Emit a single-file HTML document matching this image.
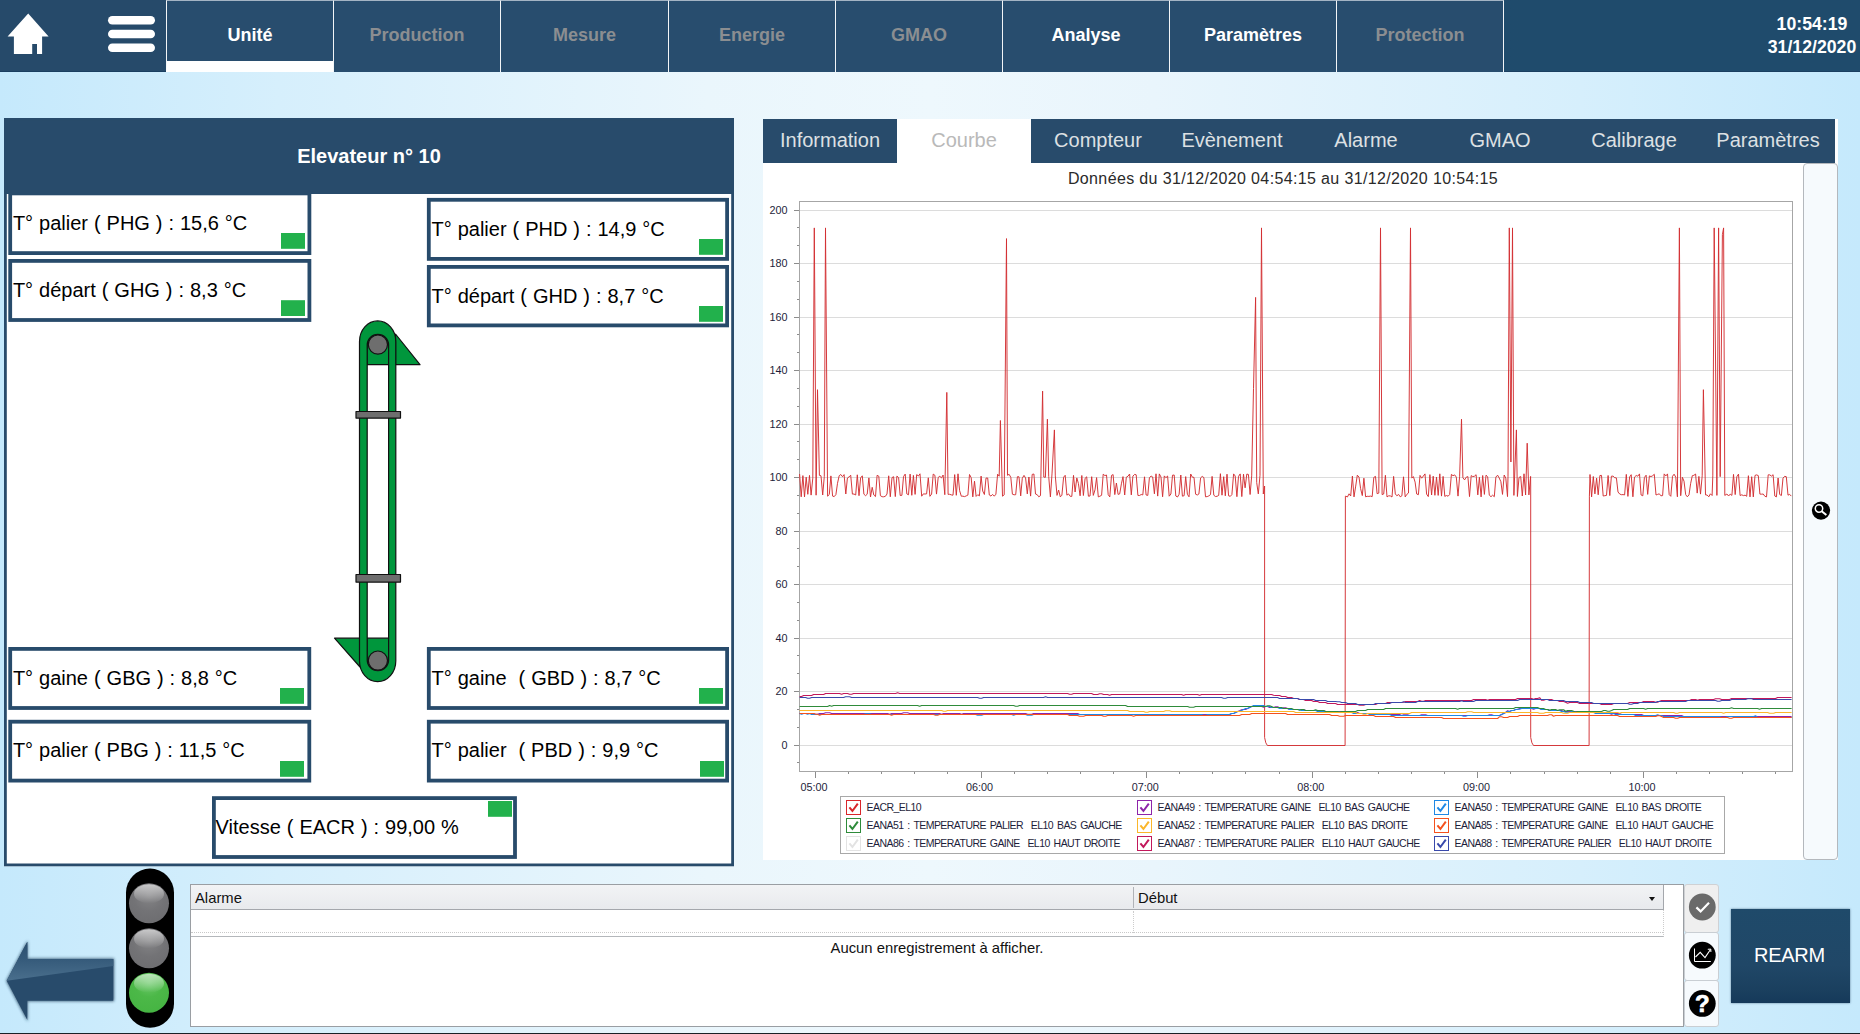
<!DOCTYPE html>
<html><head><meta charset="utf-8"><title>Elevateur</title>
<style>
*{box-sizing:border-box;margin:0;padding:0}
html,body{width:1860px;height:1034px;overflow:hidden}
body{position:relative;font-family:"Liberation Sans",sans-serif;background:linear-gradient(90deg,#c5e9fc 0%,#d6effc 15%,#eaf6fc 38%,#eef8fd 50%,#e9f5fc 62%,#d6effc 85%,#c5e9fc 100%)}
.abs{position:absolute}
#nav{position:absolute;left:0;top:0;width:1860px;height:72px;background:linear-gradient(90deg,#264a6a 0%,#264a6a 8%,#1f4b6c 82%,#1f4b6c 100%);border-bottom:1px solid #1a3f60}
.nt{position:absolute;top:0;height:72px;background:#284d6e;border:1px solid #f2f5f7;border-top-color:#a4b4c4;border-bottom:none;color:#8b8e91;font-weight:bold;font-size:18px;text-align:center;line-height:69px}
.nt.on{color:#fff}
.nt.sel{border-bottom:11px solid #fff;line-height:69px}
#clock{position:absolute;left:1752px;top:12.5px;width:120px;text-align:center;color:#fff;font-weight:bold;font-size:17.7px;line-height:23px}
#lph{position:absolute;left:4px;top:118px;width:730px;height:76px;color:#fff;font-weight:bold;font-size:20px;text-align:center;line-height:76px}
.vt{position:absolute;font-size:20px;color:#000;white-space:pre;word-spacing:.4px;line-height:23px}
#rp{position:absolute;left:763px;top:119px;width:1075px;height:741px;background:#fff}
#rbar{position:absolute;left:763px;top:119px;width:1072px;height:44px;background:#284b6b}
.st{position:absolute;top:119px;height:44px;color:#dde0e3;font-size:20px;text-align:center;line-height:42px}
.st.sel{background:#fff;color:#b9b9b9}
#side{position:absolute;left:1803px;top:163px;width:35px;height:697px;background:#f6fafd;border:1px solid #b4b8bd;border-radius:4px}
#title{position:absolute;left:763px;width:1040px;top:169px;text-align:center;font-size:16px;letter-spacing:.36px;color:#2a2a2a;line-height:20px}
#legbox{position:absolute;left:840px;top:796px;width:885px;height:57.5px;border:1px solid #a8a8a8;background:#fff}
.lg{position:absolute;height:15px;white-space:pre}
.lg span{position:absolute;left:20.5px;top:0;font-size:10.5px;line-height:15px;letter-spacing:-.55px;word-spacing:1.5px;color:#1d1d3a}
#tbl{position:absolute;left:190px;top:884px;width:1494px;height:142.5px;background:#fff;border:1px solid #9a9ea3}
#th{position:absolute;left:0;top:0;width:1473px;height:25px;background:linear-gradient(#f2f3f5,#e8eaed);border-bottom:1px solid #a4a7ac;border-right:1px solid #a4a7ac}
#fr{position:absolute;left:0;top:25px;width:1473px;height:27px;border-bottom:1px solid #b4b7bb;border-right:1px dotted #ccc}
#fr:after{content:"";position:absolute;left:0;right:0;bottom:3px;border-top:1px dotted #c8c8c8}
.btn{position:absolute;left:1684px;width:35px;background:#f6fafd;border:1px solid #c9ced3;border-radius:3px}
#rearm{position:absolute;left:1731px;top:908.5px;width:119px;height:94.5px;background:linear-gradient(#1f4a6a 0%,#204767 60%,#1a3f5e 88%,#15395a 100%);color:#fff;font-size:20px;letter-spacing:-.3px;text-indent:-2.2px;text-align:center;line-height:92px;box-shadow:0 0 2px rgba(20,50,80,.6)}
</style></head><body>
<div id="nav"></div>
<div class="nt on sel" style="left:166px;width:168px"><span>Unité</span></div><div class="nt" style="left:333px;width:168px"><span>Production</span></div><div class="nt" style="left:500px;width:169px"><span>Mesure</span></div><div class="nt" style="left:668px;width:168px"><span>Energie</span></div><div class="nt" style="left:835px;width:168px"><span>GMAO</span></div><div class="nt on" style="left:1002px;width:168px"><span>Analyse</span></div><div class="nt on" style="left:1169px;width:168px"><span>Paramètres</span></div><div class="nt" style="left:1336px;width:168px"><span>Protection</span></div>
<svg class="abs" style="left:0;top:0" width="166" height="72" viewBox="0 0 166 72"><path d="M28.2 13.4 L48.6 36.6 L42.1 36.6 L42.1 54 L37 54 L37 44 L32.2 44 L32.2 54 L13.9 54 L13.9 36.6 L7.6 36.6 Z" fill="#fff"/>
<rect x="108" y="16" width="47" height="8.6" rx="4.3" fill="#fff"/><rect x="108" y="29.7" width="47" height="8.6" rx="4.3" fill="#fff"/><rect x="108" y="43.4" width="47" height="8.6" rx="4.3" fill="#fff"/></svg>
<div id="clock">10:54:19<br>31/12/2020</div>

<svg class="abs" style="left:0;top:110px" width="740" height="760" viewBox="0 110 740 760">
<rect x="4" y="118" width="730" height="748.3" fill="#fff"/>
<rect x="10.20" y="193.40" width="299.20" height="59.70" fill="#fff" stroke="#284b6b" stroke-width="3.8"/><rect x="281" y="233" width="24" height="15.8" fill="#22b14c"/><rect x="10.20" y="260.90" width="299.20" height="59.10" fill="#fff" stroke="#284b6b" stroke-width="3.8"/><rect x="281" y="300.2" width="24" height="15.8" fill="#22b14c"/><rect x="428.80" y="199.80" width="298.30" height="59.10" fill="#fff" stroke="#284b6b" stroke-width="3.8"/><rect x="699" y="239" width="24" height="15.8" fill="#22b14c"/><rect x="428.80" y="266.90" width="298.30" height="58.50" fill="#fff" stroke="#284b6b" stroke-width="3.8"/><rect x="699" y="306" width="24" height="15.8" fill="#22b14c"/><rect x="10.20" y="648.90" width="299.10" height="59.10" fill="#fff" stroke="#284b6b" stroke-width="3.8"/><rect x="280" y="688" width="24" height="15.8" fill="#22b14c"/><rect x="10.20" y="721.70" width="299.10" height="58.90" fill="#fff" stroke="#284b6b" stroke-width="3.8"/><rect x="280" y="761" width="24" height="15.8" fill="#22b14c"/><rect x="428.80" y="648.90" width="298.30" height="59.10" fill="#fff" stroke="#284b6b" stroke-width="3.8"/><rect x="699" y="688" width="24" height="15.8" fill="#22b14c"/><rect x="428.80" y="721.70" width="298.30" height="58.90" fill="#fff" stroke="#284b6b" stroke-width="3.8"/><rect x="700" y="761" width="24" height="15.8" fill="#22b14c"/><rect x="213.90" y="798.10" width="301.10" height="58.90" fill="#fff" stroke="#284b6b" stroke-width="3.8"/><rect x="488" y="801" width="24" height="15.8" fill="#22b14c"/>
<rect x="4" y="118" width="730" height="76" fill="#284b6b"/>
<rect x="5.4" y="119.4" width="727.2" height="745.5" fill="none" stroke="#284b6b" stroke-width="2.8"/>
</svg>
<div class="vt" style="left:12.9px;top:212.3px">T° palier ( PHG ) : 15,6 °C</div><div class="vt" style="left:12.9px;top:278.6px">T° départ ( GHG ) : 8,3 °C</div><div class="vt" style="left:431.5px;top:217.5px">T° palier ( PHD ) : 14,9 °C</div><div class="vt" style="left:431.5px;top:285.2px">T° départ ( GHD ) : 8,7 °C</div><div class="vt" style="left:12.9px;top:666.6px">T° gaine ( GBG ) : 8,8 °C</div><div class="vt" style="left:12.9px;top:739.2px">T° palier ( PBG ) : 11,5 °C</div><div class="vt" style="left:431.5px;top:666.6px">T° gaine  ( GBD ) : 8,7 °C</div><div class="vt" style="left:431.5px;top:739.2px">T° palier  ( PBD ) : 9,9 °C</div><div class="vt" style="left:215.6px;top:815.6px">Vitesse ( EACR ) : 99,00 %</div>
<div id="lph">Elevateur n° 10</div>
<svg class="abs" style="left:320px;top:310px" width="120" height="380" viewBox="320 310 120 380">
 <g stroke="#111" stroke-width="1.2" stroke-linejoin="round">
  <path d="M395.5 334 L420 364.7 L395.5 364.7 Z" fill="#00963c"/>
  <path d="M360 667 L334.5 638.2 L360 638.2 Z" fill="#00963c"/>
  <path d="M367 364.7 L367 345 A10.9 10.9 0 0 1 388.8 345 L388.8 364.7 Z" fill="#00963c"/>
  <path d="M367 638.2 L367 660 A10.9 10.9 0 0 0 388.8 660 L388.8 638.2 Z" fill="#00963c"/>
  <path d="M359.5 341.5 A18.15 20.6 0 0 1 395.8 341.5 L395.8 661 A18.15 20.6 0 0 1 359.5 661 Z M367.2 345 L367.2 660 A10.7 10.7 0 0 0 388.6 660 L388.6 345 A10.7 10.7 0 0 0 367.2 345 Z" fill="#00963c" fill-rule="evenodd"/>
  <circle cx="377.9" cy="344.6" r="9.6" fill="#6e6e6e"/>
  <circle cx="377.9" cy="660.6" r="9.6" fill="#6e6e6e"/>
  <rect x="356" y="411.5" width="44.5" height="6.6" fill="#6e6e6e"/>
  <rect x="356" y="574.5" width="44.5" height="7.6" fill="#6e6e6e"/>
 </g>
</svg>

<div id="rp"></div><div id="rbar"></div>
<div class="st" style="left:763px;width:134px">Information</div><div class="st sel" style="left:897px;width:134px">Courbe</div><div class="st" style="left:1031px;width:134px">Compteur</div><div class="st" style="left:1165px;width:134px">Evènement</div><div class="st" style="left:1299px;width:134px">Alarme</div><div class="st" style="left:1433px;width:134px">GMAO</div><div class="st" style="left:1567px;width:134px">Calibrage</div><div class="st" style="left:1701px;width:134px">Paramètres</div>
<div id="side"></div>
<svg class="abs" style="left:1810px;top:500px" width="22" height="22" viewBox="0 0 22 22"><circle cx="11" cy="10.6" r="9.1" fill="#000"/><circle cx="9" cy="8.5" r="3.7" fill="none" stroke="#fff" stroke-width="1.5"/><path d="M11.7 11.3 L16.4 15" stroke="#fff" stroke-width="2" stroke-linecap="butt"/></svg>
<div id="title">Données du 31/12/2020 04:54:15 au 31/12/2020 10:54:15</div>
<div id="legbox"></div>
<svg style="position:absolute;left:0;top:0" width="1860" height="1034" viewBox="0 0 1860 1034">
<g shape-rendering="crispEdges"><line x1="799.5" x2="1792.5" y1="745.5" y2="745.5" stroke="#dcdcdc" stroke-width="1"/><line x1="799.5" x2="1792.5" y1="691.5" y2="691.5" stroke="#dcdcdc" stroke-width="1"/><line x1="799.5" x2="1792.5" y1="638.5" y2="638.5" stroke="#dcdcdc" stroke-width="1"/><line x1="799.5" x2="1792.5" y1="584.5" y2="584.5" stroke="#dcdcdc" stroke-width="1"/><line x1="799.5" x2="1792.5" y1="531.5" y2="531.5" stroke="#dcdcdc" stroke-width="1"/><line x1="799.5" x2="1792.5" y1="477.5" y2="477.5" stroke="#dcdcdc" stroke-width="1"/><line x1="799.5" x2="1792.5" y1="424.5" y2="424.5" stroke="#dcdcdc" stroke-width="1"/><line x1="799.5" x2="1792.5" y1="370.5" y2="370.5" stroke="#dcdcdc" stroke-width="1"/><line x1="799.5" x2="1792.5" y1="317.5" y2="317.5" stroke="#dcdcdc" stroke-width="1"/><line x1="799.5" x2="1792.5" y1="263.5" y2="263.5" stroke="#dcdcdc" stroke-width="1"/><line x1="799.5" x2="1792.5" y1="210.5" y2="210.5" stroke="#dcdcdc" stroke-width="1"/><line x1="797" x2="799.5" y1="762.5" y2="762.5" stroke="#8c8c8c" stroke-width="1"/><line x1="794" x2="799.5" y1="745.5" y2="745.5" stroke="#8c8c8c" stroke-width="1"/><line x1="797" x2="799.5" y1="727.5" y2="727.5" stroke="#8c8c8c" stroke-width="1"/><line x1="797" x2="799.5" y1="709.5" y2="709.5" stroke="#8c8c8c" stroke-width="1"/><line x1="794" x2="799.5" y1="691.5" y2="691.5" stroke="#8c8c8c" stroke-width="1"/><line x1="797" x2="799.5" y1="673.5" y2="673.5" stroke="#8c8c8c" stroke-width="1"/><line x1="797" x2="799.5" y1="655.5" y2="655.5" stroke="#8c8c8c" stroke-width="1"/><line x1="794" x2="799.5" y1="638.5" y2="638.5" stroke="#8c8c8c" stroke-width="1"/><line x1="797" x2="799.5" y1="620.5" y2="620.5" stroke="#8c8c8c" stroke-width="1"/><line x1="797" x2="799.5" y1="602.5" y2="602.5" stroke="#8c8c8c" stroke-width="1"/><line x1="794" x2="799.5" y1="584.5" y2="584.5" stroke="#8c8c8c" stroke-width="1"/><line x1="797" x2="799.5" y1="566.5" y2="566.5" stroke="#8c8c8c" stroke-width="1"/><line x1="797" x2="799.5" y1="548.5" y2="548.5" stroke="#8c8c8c" stroke-width="1"/><line x1="794" x2="799.5" y1="531.5" y2="531.5" stroke="#8c8c8c" stroke-width="1"/><line x1="797" x2="799.5" y1="513.5" y2="513.5" stroke="#8c8c8c" stroke-width="1"/><line x1="797" x2="799.5" y1="495.5" y2="495.5" stroke="#8c8c8c" stroke-width="1"/><line x1="794" x2="799.5" y1="477.5" y2="477.5" stroke="#8c8c8c" stroke-width="1"/><line x1="797" x2="799.5" y1="459.5" y2="459.5" stroke="#8c8c8c" stroke-width="1"/><line x1="797" x2="799.5" y1="441.5" y2="441.5" stroke="#8c8c8c" stroke-width="1"/><line x1="794" x2="799.5" y1="424.5" y2="424.5" stroke="#8c8c8c" stroke-width="1"/><line x1="797" x2="799.5" y1="406.5" y2="406.5" stroke="#8c8c8c" stroke-width="1"/><line x1="797" x2="799.5" y1="388.5" y2="388.5" stroke="#8c8c8c" stroke-width="1"/><line x1="794" x2="799.5" y1="370.5" y2="370.5" stroke="#8c8c8c" stroke-width="1"/><line x1="797" x2="799.5" y1="352.5" y2="352.5" stroke="#8c8c8c" stroke-width="1"/><line x1="797" x2="799.5" y1="334.5" y2="334.5" stroke="#8c8c8c" stroke-width="1"/><line x1="794" x2="799.5" y1="317.5" y2="317.5" stroke="#8c8c8c" stroke-width="1"/><line x1="797" x2="799.5" y1="299.5" y2="299.5" stroke="#8c8c8c" stroke-width="1"/><line x1="797" x2="799.5" y1="281.5" y2="281.5" stroke="#8c8c8c" stroke-width="1"/><line x1="794" x2="799.5" y1="263.5" y2="263.5" stroke="#8c8c8c" stroke-width="1"/><line x1="797" x2="799.5" y1="245.5" y2="245.5" stroke="#8c8c8c" stroke-width="1"/><line x1="797" x2="799.5" y1="227.5" y2="227.5" stroke="#8c8c8c" stroke-width="1"/><line x1="794" x2="799.5" y1="210.5" y2="210.5" stroke="#8c8c8c" stroke-width="1"/><line x1="815.5" x2="815.5" y1="771.0" y2="777.5" stroke="#8c8c8c" stroke-width="1"/><line x1="848.5" x2="848.5" y1="771.0" y2="774" stroke="#8c8c8c" stroke-width="1"/><line x1="881.5" x2="881.5" y1="771.0" y2="774" stroke="#8c8c8c" stroke-width="1"/><line x1="914.5" x2="914.5" y1="771.0" y2="774" stroke="#8c8c8c" stroke-width="1"/><line x1="947.5" x2="947.5" y1="771.0" y2="774" stroke="#8c8c8c" stroke-width="1"/><line x1="981.5" x2="981.5" y1="771.0" y2="777.5" stroke="#8c8c8c" stroke-width="1"/><line x1="1014.5" x2="1014.5" y1="771.0" y2="774" stroke="#8c8c8c" stroke-width="1"/><line x1="1047.5" x2="1047.5" y1="771.0" y2="774" stroke="#8c8c8c" stroke-width="1"/><line x1="1080.5" x2="1080.5" y1="771.0" y2="774" stroke="#8c8c8c" stroke-width="1"/><line x1="1113.5" x2="1113.5" y1="771.0" y2="774" stroke="#8c8c8c" stroke-width="1"/><line x1="1146.5" x2="1146.5" y1="771.0" y2="777.5" stroke="#8c8c8c" stroke-width="1"/><line x1="1179.5" x2="1179.5" y1="771.0" y2="774" stroke="#8c8c8c" stroke-width="1"/><line x1="1212.5" x2="1212.5" y1="771.0" y2="774" stroke="#8c8c8c" stroke-width="1"/><line x1="1245.5" x2="1245.5" y1="771.0" y2="774" stroke="#8c8c8c" stroke-width="1"/><line x1="1279.5" x2="1279.5" y1="771.0" y2="774" stroke="#8c8c8c" stroke-width="1"/><line x1="1312.5" x2="1312.5" y1="771.0" y2="777.5" stroke="#8c8c8c" stroke-width="1"/><line x1="1345.5" x2="1345.5" y1="771.0" y2="774" stroke="#8c8c8c" stroke-width="1"/><line x1="1378.5" x2="1378.5" y1="771.0" y2="774" stroke="#8c8c8c" stroke-width="1"/><line x1="1411.5" x2="1411.5" y1="771.0" y2="774" stroke="#8c8c8c" stroke-width="1"/><line x1="1444.5" x2="1444.5" y1="771.0" y2="774" stroke="#8c8c8c" stroke-width="1"/><line x1="1477.5" x2="1477.5" y1="771.0" y2="777.5" stroke="#8c8c8c" stroke-width="1"/><line x1="1510.5" x2="1510.5" y1="771.0" y2="774" stroke="#8c8c8c" stroke-width="1"/><line x1="1544.5" x2="1544.5" y1="771.0" y2="774" stroke="#8c8c8c" stroke-width="1"/><line x1="1577.5" x2="1577.5" y1="771.0" y2="774" stroke="#8c8c8c" stroke-width="1"/><line x1="1610.5" x2="1610.5" y1="771.0" y2="774" stroke="#8c8c8c" stroke-width="1"/><line x1="1643.5" x2="1643.5" y1="771.0" y2="777.5" stroke="#8c8c8c" stroke-width="1"/><line x1="1676.5" x2="1676.5" y1="771.0" y2="774" stroke="#8c8c8c" stroke-width="1"/><line x1="1709.5" x2="1709.5" y1="771.0" y2="774" stroke="#8c8c8c" stroke-width="1"/><line x1="1742.5" x2="1742.5" y1="771.0" y2="774" stroke="#8c8c8c" stroke-width="1"/><line x1="1775.5" x2="1775.5" y1="771.0" y2="774" stroke="#8c8c8c" stroke-width="1"/>
<rect x="799.5" y="201.5" width="993.0" height="569.5" fill="none" stroke="#a6a6a6" stroke-width="1"/></g>
<g fill="none" stroke-width="1.12" stroke-linejoin="round">
<path d="M799.6,474.0 L801.2,496.8 L802.9,475.6 L804.5,496.9 L806.2,477.2 L807.8,494.3 L809.5,475.4 L811.1,495.1 L812.8,478.1 L814.3,227.9 L816.1,495.2 L817.5,389.7 L819.4,475.4 L821.0,475.8 L822.7,495.0 L824.3,476.3 L825.5,227.9 L827.6,496.2 L829.3,494.5 L830.9,475.9 L832.6,496.1 L834.2,496.6 L835.9,494.6 L837.5,483.3 L839.2,475.7 L840.8,474.5 L842.5,476.7 L844.1,474.6 L845.8,494.0 L847.4,478.0 L849.1,476.9 L850.7,475.2 L852.4,494.1 L854.0,494.0 L855.7,495.0 L857.3,474.8 L859.0,495.7 L860.6,477.9 L862.3,475.8 L863.9,494.2 L865.6,495.7 L867.2,494.2 L868.9,477.9 L870.5,497.0 L872.2,487.3 L873.8,495.0 L875.5,496.6 L877.1,475.3 L878.8,476.2 L880.4,495.7 L882.1,496.7 L883.7,496.8 L885.4,496.3 L887.0,494.0 L888.7,475.8 L890.3,496.8 L892.0,477.6 L893.6,476.7 L895.3,496.6 L896.9,476.1 L898.6,477.6 L900.2,495.5 L901.9,495.3 L903.5,476.6 L905.2,474.1 L906.8,493.9 L908.5,494.8 L910.1,474.1 L911.8,495.3 L913.4,475.4 L915.1,494.4 L916.7,474.6 L918.4,476.0 L920.0,473.8 L921.7,496.2 L923.3,493.9 L925.0,494.0 L926.6,493.9 L928.3,477.8 L929.9,496.3 L931.6,494.1 L933.2,474.1 L934.9,475.3 L936.5,494.1 L938.2,477.4 L939.8,476.3 L941.5,477.9 L943.1,475.0 L944.8,494.7 L946.8,392.4 L948.1,494.4 L949.7,494.3 L951.4,494.9 L953.0,495.2 L954.7,474.6 L956.3,495.3 L958.0,473.8 L959.6,490.6 L961.3,496.2 L962.9,496.2 L964.6,496.6 L966.2,495.9 L967.9,495.1 L969.5,474.5 L971.2,477.7 L972.8,496.9 L974.5,481.2 L976.1,496.4 L977.8,494.7 L979.4,495.9 L981.1,476.1 L982.7,491.0 L984.4,494.5 L986.0,478.1 L987.7,478.0 L989.3,495.0 L991.0,496.1 L992.6,494.4 L994.3,496.2 L995.9,494.2 L997.6,474.2 L999.2,476.2 L1000.4,420.5 L1002.5,496.2 L1004.2,494.8 L1006.5,238.6 L1007.5,475.3 L1009.1,474.3 L1010.8,477.3 L1012.4,494.2 L1014.1,494.8 L1015.7,494.7 L1017.4,476.7 L1019.0,476.8 L1020.7,495.9 L1022.3,478.2 L1024.0,475.4 L1025.6,478.0 L1027.3,493.9 L1028.9,477.0 L1030.6,496.1 L1032.2,474.4 L1033.9,474.0 L1035.5,494.0 L1037.2,494.7 L1038.8,496.8 L1040.5,495.6 L1042.6,391.1 L1043.8,477.1 L1045.4,477.3 L1047.4,419.2 L1048.7,476.4 L1050.4,496.9 L1052.0,473.9 L1054.4,429.9 L1055.3,475.9 L1057.0,495.4 L1058.6,490.0 L1060.3,496.9 L1061.9,495.2 L1063.6,477.2 L1065.2,475.3 L1066.9,495.2 L1068.5,493.9 L1070.2,496.3 L1071.8,496.4 L1073.5,475.4 L1075.1,492.0 L1076.8,477.9 L1078.4,483.4 L1080.1,495.8 L1081.8,475.5 L1083.4,495.5 L1085.1,478.3 L1086.7,476.8 L1088.4,496.2 L1090.0,496.0 L1091.7,476.7 L1093.3,495.4 L1095.0,489.8 L1096.6,477.6 L1098.3,496.9 L1099.9,496.2 L1101.6,495.3 L1103.2,474.2 L1104.9,475.6 L1106.5,475.0 L1108.2,494.7 L1109.8,496.9 L1111.5,475.4 L1113.1,474.6 L1114.8,494.6 L1116.4,483.0 L1118.1,494.4 L1119.7,493.9 L1121.4,483.8 L1123.0,476.6 L1124.7,495.0 L1126.3,477.2 L1128.0,476.2 L1129.6,474.0 L1131.3,494.9 L1132.9,476.1 L1134.6,474.4 L1136.2,474.8 L1137.9,495.4 L1139.5,495.5 L1141.2,494.5 L1142.8,494.9 L1144.5,476.8 L1146.1,495.0 L1147.8,495.4 L1149.4,477.8 L1151.1,476.0 L1152.7,477.0 L1154.4,493.8 L1156.0,473.8 L1157.7,496.1 L1159.3,473.9 L1161.0,477.0 L1162.6,496.8 L1164.3,475.9 L1165.9,477.7 L1167.6,476.0 L1169.2,496.2 L1170.9,494.0 L1172.5,475.2 L1174.2,475.0 L1175.8,496.0 L1177.5,497.0 L1179.1,494.3 L1180.8,475.0 L1182.4,496.2 L1184.1,495.7 L1185.7,476.6 L1187.4,494.3 L1189.0,496.8 L1190.7,474.0 L1192.3,477.1 L1194.0,477.4 L1195.6,494.2 L1197.3,495.0 L1198.9,494.0 L1200.6,477.9 L1202.2,476.4 L1203.9,477.6 L1205.5,496.8 L1207.2,496.6 L1208.8,495.9 L1210.5,494.6 L1212.1,476.4 L1213.8,495.2 L1215.4,496.5 L1217.1,496.3 L1218.7,495.4 L1220.4,473.7 L1222.0,495.2 L1223.7,476.7 L1225.3,495.8 L1227.0,474.2 L1228.6,495.8 L1230.3,496.3 L1231.9,494.6 L1233.6,473.9 L1235.2,476.0 L1236.9,496.7 L1238.5,476.4 L1240.2,473.9 L1241.8,496.6 L1243.5,474.2 L1245.1,487.8 L1246.8,474.1 L1248.4,474.4 L1250.1,494.5 L1251.7,475.9 L1253.5,388.4 L1255.6,297.4 L1256.7,482.6 L1258.3,493.9 L1260.0,475.4 L1261.5,227.9 L1263.3,494.0 L1264.6,486.0 L1264.6,737.5 L1265.8,742.8 L1267.4,745.5 L1345.1,745.5 L1345.4,496.2 L1345.8,496.2 L1347.4,497.0 L1349.1,493.8 L1350.7,496.0 L1352.4,476.1 L1354.0,496.9 L1355.7,486.1 L1357.3,475.2 L1359.0,477.1 L1360.6,488.6 L1362.3,495.6 L1363.9,478.2 L1365.6,496.8 L1367.2,496.3 L1368.9,496.4 L1370.5,496.1 L1372.2,496.6 L1373.8,477.4 L1375.5,476.4 L1377.1,493.7 L1378.8,493.1 L1380.5,227.9 L1382.1,494.6 L1383.7,494.0 L1385.4,475.3 L1387.0,496.9 L1388.7,495.8 L1390.3,495.9 L1392.0,497.0 L1393.6,476.4 L1395.3,493.9 L1396.9,495.8 L1398.6,494.4 L1400.2,496.8 L1401.9,495.8 L1403.5,476.8 L1405.2,496.9 L1406.8,494.4 L1408.5,493.0 L1410.5,227.9 L1411.8,478.0 L1413.4,476.6 L1415.1,482.1 L1416.7,494.0 L1418.4,494.7 L1420.0,475.4 L1421.7,478.2 L1423.3,476.1 L1425.0,473.9 L1426.6,494.1 L1428.3,496.6 L1429.9,474.6 L1431.6,495.0 L1433.2,476.2 L1434.9,495.3 L1436.5,477.1 L1438.2,495.4 L1439.8,473.8 L1441.5,496.1 L1443.1,476.4 L1444.8,496.4 L1446.4,495.5 L1448.1,496.2 L1449.7,494.5 L1451.4,474.4 L1453.0,475.7 L1454.7,474.9 L1456.3,477.1 L1458.0,496.1 L1459.6,476.8 L1461.5,419.2 L1462.9,477.8 L1464.6,479.9 L1466.2,477.2 L1467.9,476.6 L1469.5,496.6 L1471.2,475.6 L1472.8,476.6 L1474.5,476.2 L1476.1,474.7 L1477.8,494.9 L1479.4,477.3 L1481.1,496.9 L1482.7,475.5 L1484.4,494.4 L1486.0,475.2 L1487.7,476.8 L1489.3,495.2 L1491.0,496.7 L1492.6,495.2 L1494.3,496.7 L1495.9,477.0 L1497.6,475.2 L1499.2,478.0 L1500.9,481.7 L1502.5,494.4 L1504.2,475.0 L1505.8,478.2 L1507.5,496.6 L1508.0,476.7 L1509.3,227.9 L1510.9,462.0 L1512.5,227.9 L1513.9,495.4 L1516.4,429.9 L1517.4,496.5 L1519.0,477.5 L1520.7,476.5 L1522.3,496.0 L1524.0,473.8 L1525.6,495.0 L1527.2,443.2 L1528.9,494.9 L1530.6,476.4 L1530.7,486.0 L1530.7,737.5 L1531.9,742.8 L1533.5,745.5 L1589.1,745.5 L1589.4,496.2 L1590.0,474.5 L1591.6,496.9 L1593.3,476.5 L1594.9,493.9 L1596.6,478.1 L1598.2,494.8 L1599.9,475.5 L1601.5,475.4 L1603.2,496.0 L1604.8,495.7 L1606.5,495.4 L1608.1,475.5 L1609.8,495.6 L1611.4,476.2 L1613.1,476.1 L1614.7,477.7 L1616.4,477.9 L1618.0,492.0 L1619.7,494.0 L1621.3,494.7 L1623.0,494.6 L1624.6,494.9 L1626.3,474.4 L1627.9,496.4 L1629.6,477.0 L1631.2,474.7 L1632.9,496.8 L1634.5,477.1 L1636.2,475.5 L1637.8,476.2 L1639.5,473.9 L1641.1,495.0 L1642.8,495.8 L1644.4,477.5 L1646.1,475.2 L1647.7,494.4 L1649.4,475.9 L1651.0,476.6 L1652.7,475.7 L1654.3,474.3 L1656.0,495.0 L1657.6,494.4 L1659.3,493.8 L1660.9,495.8 L1662.6,495.6 L1664.2,473.9 L1665.9,475.9 L1667.5,473.9 L1669.2,494.6 L1670.8,496.3 L1672.5,476.3 L1674.1,474.2 L1675.8,477.2 L1677.4,496.8 L1679.4,227.9 L1680.7,495.7 L1682.4,477.3 L1684.0,481.2 L1685.7,494.7 L1687.3,496.8 L1689.0,494.9 L1690.6,483.7 L1692.3,475.7 L1693.9,475.3 L1695.6,474.0 L1697.2,493.1 L1698.9,476.4 L1700.5,494.1 L1702.2,475.8 L1703.4,389.7 L1705.5,494.9 L1707.1,495.0 L1708.8,496.8 L1710.4,493.8 L1712.1,495.5 L1712.8,475.9 L1714.2,227.9 L1716.9,495.4 L1718.6,227.9 L1720.2,476.7 L1722.4,234.6 L1723.6,227.9 L1724.8,495.4 L1726.9,494.0 L1728.6,496.0 L1730.2,494.1 L1731.9,495.4 L1733.5,474.4 L1735.2,494.6 L1736.8,476.8 L1738.5,474.1 L1740.1,495.5 L1741.8,494.8 L1743.4,495.6 L1745.1,495.2 L1746.7,496.3 L1748.4,475.7 L1750.0,496.9 L1751.7,476.7 L1753.3,496.9 L1755.0,475.4 L1756.6,474.9 L1758.3,475.6 L1759.9,494.1 L1761.6,494.2 L1763.2,494.0 L1764.9,496.3 L1766.5,496.9 L1768.2,474.8 L1769.8,474.9 L1771.5,476.1 L1773.1,474.7 L1774.8,496.0 L1776.4,496.9 L1778.1,478.0 L1779.7,494.5 L1781.4,495.5 L1783.0,478.1 L1784.7,476.3 L1786.3,476.7 L1788.0,495.2 L1789.6,494.3 L1791.3,496.1" stroke="#d32f33" stroke-width="0.95" stroke-linejoin="miter" stroke-miterlimit="20"/>
<path d="M799.6,713.5 L813.6,713.5 L815.6,714.3 L817.6,714.3 L819.6,713.5 L823.6,713.5 L825.6,712.7 L829.6,712.7 L831.6,713.5 L887.6,713.5 L889.6,714.3 L891.6,713.5 L901.6,713.5 L903.6,712.7 L907.6,712.7 L909.6,713.5 L939.6,713.5 L941.6,714.3 L943.6,713.5 L959.6,713.5 L961.6,714.3 L963.6,713.5 L1025.6,713.5 L1027.6,714.3 L1031.6,714.3 L1033.6,713.5 L1077.6,713.5 L1079.6,714.5 L1099.6,714.5 L1101.6,715.3 L1103.6,714.5 L1145.6,714.5 L1147.6,715.3 L1151.6,715.3 L1153.6,714.5 L1229.6,714.5 L1231.6,713.5 L1233.6,713.5 L1235.6,712.5 L1237.6,711.5 L1239.6,710.7 L1241.6,709.7 L1243.6,709.5 L1245.6,709.5 L1247.6,708.5 L1249.6,707.5 L1251.6,706.5 L1261.6,706.5 L1263.6,707.3 L1265.6,706.5 L1267.6,706.5 L1269.6,707.5 L1273.6,707.5 L1275.6,706.7 L1277.6,706.7 L1279.6,707.7 L1281.6,708.5 L1283.6,707.7 L1285.6,707.7 L1287.6,708.5 L1289.6,709.5 L1303.6,709.5 L1305.6,710.5 L1323.6,710.5 L1325.6,711.5 L1345.6,711.5 L1347.6,712.5 L1353.6,712.5 L1355.6,713.3 L1357.6,712.5 L1359.6,713.5 L1375.6,713.5 L1377.6,714.5 L1381.6,714.5 L1383.6,713.7 L1385.6,713.7 L1387.6,714.5 L1399.6,714.5 L1401.6,715.5 L1403.6,714.7 L1407.6,714.7 L1409.6,715.5 L1419.6,715.5 L1421.6,714.7 L1425.6,714.7 L1427.6,715.5 L1487.6,715.5 L1489.6,714.7 L1491.6,714.7 L1493.6,715.5 L1499.6,715.5 L1501.6,714.5 L1503.6,713.5 L1505.6,712.5 L1507.6,710.7 L1509.6,711.5 L1511.6,710.5 L1513.6,710.5 L1515.6,709.5 L1517.6,709.5 L1519.6,708.5 L1531.6,708.5 L1533.6,709.3 L1535.6,708.5 L1539.6,708.5 L1541.6,709.5 L1547.6,709.5 L1549.6,710.5 L1561.6,710.5 L1563.6,711.5 L1577.6,711.5 L1579.6,712.5 L1599.6,712.5 L1601.6,713.5 L1609.6,713.5 L1611.6,714.3 L1613.6,713.5 L1619.6,713.5 L1621.6,714.5 L1641.6,714.5 L1643.6,715.5 L1681.6,715.5 L1683.6,716.5 L1791.6,716.5" stroke="#8e24aa"/><path d="M799.6,713.5 L801.6,714.3 L803.6,713.5 L805.6,713.5 L807.6,714.3 L809.6,713.5 L811.6,714.5 L863.6,714.5 L865.6,713.7 L869.6,713.7 L871.6,714.5 L975.6,714.5 L977.6,715.3 L981.6,715.3 L983.6,714.5 L1011.6,714.5 L1013.6,715.3 L1015.6,714.5 L1025.6,714.5 L1027.6,715.3 L1031.6,715.3 L1033.6,714.5 L1201.6,714.5 L1203.6,715.3 L1205.6,715.3 L1207.6,714.5 L1229.6,714.5 L1231.6,713.5 L1233.6,713.5 L1235.6,712.5 L1237.6,711.5 L1239.6,711.5 L1241.6,710.5 L1243.6,709.5 L1245.6,708.5 L1247.6,708.5 L1249.6,707.5 L1251.6,706.5 L1253.6,705.5 L1263.6,705.5 L1265.6,706.5 L1269.6,706.5 L1271.6,707.5 L1277.6,707.5 L1279.6,708.5 L1287.6,708.5 L1289.6,709.5 L1299.6,709.5 L1301.6,710.5 L1315.6,710.5 L1317.6,711.5 L1337.6,711.5 L1339.6,712.5 L1351.6,712.5 L1353.6,713.5 L1367.6,713.5 L1369.6,714.5 L1389.6,714.5 L1391.6,715.5 L1461.6,715.5 L1463.6,716.3 L1465.6,716.3 L1467.6,715.5 L1499.6,715.5 L1501.6,714.5 L1503.6,713.5 L1505.6,712.5 L1507.6,711.5 L1509.6,711.5 L1511.6,710.5 L1513.6,710.5 L1515.6,709.5 L1517.6,709.3 L1519.6,709.3 L1521.6,708.5 L1539.6,708.5 L1541.6,709.5 L1547.6,709.5 L1549.6,710.5 L1559.6,710.5 L1561.6,711.5 L1563.6,711.5 L1565.6,712.3 L1569.6,712.3 L1571.6,711.5 L1573.6,711.5 L1575.6,712.5 L1593.6,712.5 L1595.6,713.5 L1613.6,713.5 L1615.6,714.5 L1633.6,714.5 L1635.6,715.5 L1655.6,715.5 L1657.6,714.7 L1659.6,715.5 L1661.6,715.5 L1663.6,716.5 L1719.6,716.5 L1721.6,717.3 L1725.6,717.3 L1727.6,716.5 L1753.6,716.5 L1755.6,715.7 L1757.6,717.5 L1791.6,717.5" stroke="#1e88e5"/><path d="M799.6,706.5 L827.6,706.5 L829.6,705.5 L831.6,706.3 L833.6,705.5 L917.6,705.5 L919.6,706.3 L921.6,705.5 L1013.6,705.5 L1015.6,706.3 L1017.6,706.3 L1019.6,705.5 L1125.6,705.5 L1127.6,706.5 L1187.6,706.5 L1189.6,707.3 L1193.6,707.3 L1195.6,706.5 L1265.6,706.5 L1267.6,705.7 L1269.6,705.7 L1271.6,706.5 L1273.6,707.5 L1281.6,707.5 L1283.6,708.5 L1291.6,708.5 L1293.6,709.5 L1297.6,709.5 L1299.6,710.3 L1301.6,709.5 L1303.6,709.5 L1305.6,710.5 L1313.6,710.5 L1315.6,709.7 L1317.6,710.5 L1323.6,710.5 L1325.6,711.5 L1337.6,711.5 L1339.6,712.3 L1341.6,711.5 L1355.6,711.5 L1357.6,710.5 L1365.6,710.5 L1367.6,709.5 L1383.6,709.5 L1385.6,708.5 L1455.6,708.5 L1457.6,709.3 L1459.6,708.5 L1513.6,708.5 L1515.6,707.5 L1537.6,707.5 L1539.6,708.5 L1543.6,708.5 L1545.6,709.5 L1547.6,709.5 L1549.6,710.3 L1551.6,709.5 L1555.6,709.5 L1557.6,710.5 L1559.6,709.7 L1563.6,709.7 L1565.6,711.3 L1567.6,710.5 L1571.6,710.5 L1573.6,711.3 L1575.6,712.3 L1577.6,711.5 L1601.6,711.5 L1603.6,710.5 L1605.6,710.5 L1607.6,711.3 L1609.6,711.3 L1611.6,710.5 L1613.6,709.5 L1627.6,709.5 L1629.6,708.5 L1643.6,708.5 L1645.6,709.3 L1647.6,708.5 L1729.6,708.5 L1731.6,707.7 L1733.6,708.5 L1757.6,708.5 L1759.6,709.3 L1761.6,708.5 L1791.6,708.5" stroke="#2e8b3a"/><path d="M799.6,710.5 L941.6,710.5 L943.6,711.3 L945.6,711.3 L947.6,710.5 L1127.6,710.5 L1129.6,711.5 L1143.6,711.5 L1145.6,712.3 L1147.6,712.3 L1149.6,711.5 L1163.6,711.5 L1165.6,710.7 L1169.6,710.7 L1171.6,711.5 L1293.6,711.5 L1295.6,712.5 L1355.6,712.5 L1357.6,713.5 L1361.6,713.5 L1363.6,714.3 L1365.6,714.3 L1367.6,713.5 L1409.6,713.5 L1411.6,712.5 L1465.6,712.5 L1467.6,711.7 L1471.6,711.7 L1473.6,712.5 L1537.6,712.5 L1539.6,713.3 L1543.6,713.3 L1545.6,712.5 L1561.6,712.5 L1563.6,713.3 L1567.6,713.3 L1569.6,712.5 L1617.6,712.5 L1619.6,713.3 L1621.6,712.5 L1673.6,712.5 L1675.6,713.3 L1677.6,713.3 L1679.6,712.5 L1721.6,712.5 L1723.6,713.3 L1725.6,712.5 L1767.6,712.5 L1769.6,713.3 L1773.6,713.3 L1775.6,712.5 L1791.6,712.5" stroke="#fbb62a"/><path d="M799.6,713.5 L813.6,713.5 L815.6,714.3 L817.6,714.3 L819.6,715.3 L821.6,714.5 L889.6,714.5 L891.6,715.3 L893.6,714.5 L933.6,714.5 L935.6,715.3 L937.6,715.3 L939.6,714.5 L1067.6,714.5 L1069.6,715.5 L1077.6,715.5 L1079.6,716.3 L1083.6,716.3 L1085.6,715.5 L1101.6,715.5 L1103.6,716.3 L1105.6,716.3 L1107.6,715.5 L1131.6,715.5 L1133.6,716.3 L1135.6,715.5 L1239.6,715.5 L1241.6,714.5 L1249.6,714.5 L1251.6,713.5 L1285.6,713.5 L1287.6,714.5 L1329.6,714.5 L1331.6,715.5 L1337.6,715.5 L1339.6,716.3 L1343.6,716.3 L1345.6,715.5 L1373.6,715.5 L1375.6,716.5 L1393.6,716.5 L1395.6,717.5 L1441.6,717.5 L1443.6,718.5 L1497.6,718.5 L1499.6,716.7 L1501.6,716.7 L1503.6,717.5 L1507.6,717.5 L1509.6,716.5 L1517.6,716.5 L1519.6,715.5 L1547.6,715.5 L1549.6,714.7 L1551.6,714.7 L1553.6,716.3 L1555.6,715.5 L1617.6,715.5 L1619.6,716.5 L1655.6,716.5 L1657.6,715.7 L1659.6,715.7 L1661.6,716.5 L1663.6,717.5 L1673.6,717.5 L1675.6,718.3 L1677.6,718.3 L1679.6,717.5 L1727.6,717.5 L1729.6,718.3 L1731.6,718.3 L1733.6,717.5 L1791.6,717.5" stroke="#f4511e"/><path d="M799.6,696.5 L801.6,696.5 L803.6,695.5 L811.6,695.5 L813.6,694.5 L823.6,694.5 L825.6,693.5 L839.6,693.5 L841.6,694.3 L843.6,693.5 L847.6,693.5 L849.6,694.3 L851.6,694.3 L853.6,693.5 L895.6,693.5 L897.6,692.7 L899.6,693.5 L1067.6,693.5 L1069.6,694.3 L1071.6,694.3 L1073.6,693.5 L1091.6,693.5 L1093.6,694.5 L1097.6,694.5 L1099.6,693.7 L1101.6,693.7 L1103.6,694.5 L1107.6,694.5 L1109.6,695.3 L1111.6,694.5 L1181.6,694.5 L1183.6,695.3 L1185.6,694.5 L1197.6,694.5 L1199.6,695.3 L1201.6,694.5 L1271.6,694.5 L1273.6,695.3 L1275.6,695.5 L1279.6,695.5 L1281.6,696.5 L1285.6,696.5 L1287.6,697.5 L1291.6,697.5 L1293.6,698.5 L1297.6,698.5 L1299.6,699.5 L1303.6,699.5 L1305.6,700.5 L1311.6,700.5 L1313.6,701.5 L1317.6,701.5 L1319.6,702.5 L1325.6,702.5 L1327.6,703.5 L1335.6,703.5 L1337.6,704.5 L1357.6,704.5 L1359.6,705.3 L1363.6,705.3 L1365.6,704.5 L1375.6,704.5 L1377.6,703.5 L1385.6,703.5 L1387.6,702.5 L1401.6,702.5 L1403.6,702.3 L1405.6,701.5 L1417.6,701.5 L1419.6,700.5 L1421.6,701.3 L1423.6,701.3 L1425.6,700.5 L1471.6,700.5 L1473.6,699.5 L1485.6,699.5 L1487.6,700.3 L1489.6,699.5 L1515.6,699.5 L1517.6,698.5 L1531.6,698.5 L1533.6,699.3 L1535.6,698.5 L1537.6,698.5 L1539.6,697.7 L1541.6,700.3 L1543.6,700.3 L1545.6,699.5 L1551.6,699.5 L1553.6,700.5 L1557.6,700.5 L1559.6,701.5 L1563.6,701.5 L1565.6,702.3 L1567.6,703.3 L1569.6,702.5 L1577.6,702.5 L1579.6,703.5 L1599.6,703.5 L1601.6,704.5 L1611.6,704.5 L1613.6,703.5 L1627.6,703.5 L1629.6,702.5 L1641.6,702.5 L1643.6,701.5 L1653.6,701.5 L1655.6,702.3 L1657.6,702.3 L1659.6,701.3 L1661.6,700.5 L1689.6,700.5 L1691.6,699.5 L1695.6,699.5 L1697.6,700.3 L1699.6,699.5 L1713.6,699.5 L1715.6,698.7 L1719.6,698.7 L1721.6,699.5 L1729.6,699.5 L1731.6,698.5 L1775.6,698.5 L1777.6,697.5 L1791.6,697.5" stroke="#c2185b"/><path d="M799.6,697.5 L805.6,697.5 L807.6,698.3 L809.6,698.3 L811.6,697.5 L843.6,697.5 L845.6,696.7 L849.6,696.7 L851.6,697.5 L977.6,697.5 L979.6,698.3 L981.6,698.3 L983.6,697.5 L1043.6,697.5 L1045.6,696.7 L1047.6,697.5 L1221.6,697.5 L1223.6,698.3 L1225.6,698.3 L1227.6,697.5 L1277.6,697.5 L1279.6,698.5 L1297.6,698.5 L1299.6,699.5 L1313.6,699.5 L1315.6,700.5 L1325.6,700.5 L1327.6,701.5 L1335.6,701.5 L1337.6,701.7 L1339.6,701.7 L1341.6,702.5 L1345.6,702.5 L1347.6,703.5 L1355.6,703.5 L1357.6,704.5 L1373.6,704.5 L1375.6,703.5 L1389.6,703.5 L1391.6,702.5 L1401.6,702.5 L1403.6,701.7 L1405.6,702.5 L1415.6,702.5 L1417.6,701.5 L1459.6,701.5 L1461.6,700.7 L1463.6,701.5 L1473.6,701.5 L1475.6,700.5 L1517.6,700.5 L1519.6,699.5 L1547.6,699.5 L1549.6,700.5 L1563.6,700.5 L1565.6,701.5 L1577.6,701.5 L1579.6,702.5 L1591.6,702.5 L1593.6,703.5 L1627.6,703.5 L1629.6,704.3 L1631.6,704.3 L1633.6,703.5 L1637.6,703.5 L1639.6,702.5 L1655.6,702.5 L1657.6,701.5 L1685.6,701.5 L1687.6,700.5 L1715.6,700.5 L1717.6,701.3 L1719.6,701.3 L1721.6,700.5 L1729.6,700.5 L1731.6,699.5 L1745.6,699.5 L1747.6,698.7 L1751.6,698.7 L1753.6,699.5 L1791.6,699.5" stroke="#3949ab"/>
</g>
<g font-family="Liberation Sans, sans-serif" font-size="10.8" fill="#1d1d3a"><text x="787.5" y="749.2" text-anchor="end">0</text><text x="787.5" y="695.2" text-anchor="end">20</text><text x="787.5" y="642.2" text-anchor="end">40</text><text x="787.5" y="588.2" text-anchor="end">60</text><text x="787.5" y="535.2" text-anchor="end">80</text><text x="787.5" y="481.2" text-anchor="end">100</text><text x="787.5" y="428.2" text-anchor="end">120</text><text x="787.5" y="374.2" text-anchor="end">140</text><text x="787.5" y="321.2" text-anchor="end">160</text><text x="787.5" y="267.2" text-anchor="end">180</text><text x="787.5" y="214.2" text-anchor="end">200</text><text x="814.0" y="791" text-anchor="middle">05:00</text><text x="979.6" y="791" text-anchor="middle">06:00</text><text x="1145.2" y="791" text-anchor="middle">07:00</text><text x="1310.8" y="791" text-anchor="middle">08:00</text><text x="1476.4" y="791" text-anchor="middle">09:00</text><text x="1642.0" y="791" text-anchor="middle">10:00</text></g>
</svg>
<div class="lg" style="left:846px;top:800px"><svg width="15" height="15" viewBox="0 0 15 15"><rect x="0.5" y="0.5" width="14" height="14" fill="#fff" stroke="#d9262b" stroke-width="1"/><path d="M3.4 7.4 L6.4 11 L11.8 3.6" fill="none" stroke="#d9262b" stroke-width="2"/></svg><span>EACR_EL10</span></div><div class="lg" style="left:1137px;top:800px"><svg width="15" height="15" viewBox="0 0 15 15"><rect x="0.5" y="0.5" width="14" height="14" fill="#fff" stroke="#8e24aa" stroke-width="1"/><path d="M3.4 7.4 L6.4 11 L11.8 3.6" fill="none" stroke="#8e24aa" stroke-width="2"/></svg><span>EANA49 : TEMPERATURE GAINE  EL10 BAS GAUCHE</span></div><div class="lg" style="left:1434px;top:800px"><svg width="15" height="15" viewBox="0 0 15 15"><rect x="0.5" y="0.5" width="14" height="14" fill="#fff" stroke="#1e88e5" stroke-width="1"/><path d="M3.4 7.4 L6.4 11 L11.8 3.6" fill="none" stroke="#1e88e5" stroke-width="2"/></svg><span>EANA50 : TEMPERATURE GAINE  EL10 BAS DROITE</span></div><div class="lg" style="left:846px;top:818px"><svg width="15" height="15" viewBox="0 0 15 15"><rect x="0.5" y="0.5" width="14" height="14" fill="#fff" stroke="#2e8b3a" stroke-width="1"/><path d="M3.4 7.4 L6.4 11 L11.8 3.6" fill="none" stroke="#2e8b3a" stroke-width="2"/></svg><span>EANA51 : TEMPERATURE PALIER  EL10 BAS GAUCHE</span></div><div class="lg" style="left:1137px;top:818px"><svg width="15" height="15" viewBox="0 0 15 15"><rect x="0.5" y="0.5" width="14" height="14" fill="#fff" stroke="#fbb62a" stroke-width="1"/><path d="M3.4 7.4 L6.4 11 L11.8 3.6" fill="none" stroke="#fbb62a" stroke-width="2"/></svg><span>EANA52 : TEMPERATURE PALIER  EL10 BAS DROITE</span></div><div class="lg" style="left:1434px;top:818px"><svg width="15" height="15" viewBox="0 0 15 15"><rect x="0.5" y="0.5" width="14" height="14" fill="#fff" stroke="#f4511e" stroke-width="1"/><path d="M3.4 7.4 L6.4 11 L11.8 3.6" fill="none" stroke="#f4511e" stroke-width="2"/></svg><span>EANA85 : TEMPERATURE GAINE  EL10 HAUT GAUCHE</span></div><div class="lg" style="left:846px;top:836px"><svg width="15" height="15" viewBox="0 0 15 15"><rect x="0.5" y="0.5" width="14" height="14" fill="#fff" stroke="#e3e3e3" stroke-width="1"/><path d="M3.4 7.4 L6.4 11 L11.8 3.6" fill="none" stroke="#e3e3e3" stroke-width="2"/></svg><span>EANA86 : TEMPERATURE GAINE  EL10 HAUT DROITE</span></div><div class="lg" style="left:1137px;top:836px"><svg width="15" height="15" viewBox="0 0 15 15"><rect x="0.5" y="0.5" width="14" height="14" fill="#fff" stroke="#c2185b" stroke-width="1"/><path d="M3.4 7.4 L6.4 11 L11.8 3.6" fill="none" stroke="#c2185b" stroke-width="2"/></svg><span>EANA87 : TEMPERATURE PALIER  EL10 HAUT GAUCHE</span></div><div class="lg" style="left:1434px;top:836px"><svg width="15" height="15" viewBox="0 0 15 15"><rect x="0.5" y="0.5" width="14" height="14" fill="#fff" stroke="#3949ab" stroke-width="1"/><path d="M3.4 7.4 L6.4 11 L11.8 3.6" fill="none" stroke="#3949ab" stroke-width="2"/></svg><span>EANA88 : TEMPERATURE PALIER  EL10 HAUT DROITE</span></div>

<svg class="abs" style="left:0;top:930px" width="120" height="100" viewBox="0 930 120 100">
 <defs><linearGradient id="ag" x1="0" y1="941" x2="0" y2="981" gradientUnits="userSpaceOnUse"><stop offset="0" stop-color="#2a4e6e"/><stop offset=".45" stop-color="#355a7a"/><stop offset="1" stop-color="#4a6f8d"/></linearGradient>
 <filter id="sh" x="-10%" y="-10%" width="120%" height="120%"><feGaussianBlur stdDeviation="1.4"/></filter></defs>
 <path d="M6.2 980.9 L27.5 940.5 L27.5 958.6 L114 958.6 L114 1001.3 L27.5 1001.3 L27.5 1021.5 Z" fill="#1c3a56" opacity=".8" filter="url(#sh)"/>
 <path d="M6.7 980.7 L27.3 941.7 L27.3 959 L113.3 959 L113.3 1000.7 L27.3 1000.7 L27.3 1020 Z" fill="#284b6b"/>
 <path d="M6.7 980.7 L27.3 941.7 L27.3 959 L113.3 959 L113.3 966 L6.7 980.7 Z" fill="url(#ag)"/>
</svg>
<svg class="abs" style="left:120px;top:864px" width="60" height="168" viewBox="120 864 60 168">
 <defs>
  <radialGradient id="gg" cx=".5" cy=".3" r=".8"><stop offset="0" stop-color="#858587"/><stop offset=".5" stop-color="#737376"/><stop offset="1" stop-color="#6c6c6f"/></radialGradient>
  <radialGradient id="gn" cx=".5" cy=".25" r=".8"><stop offset="0" stop-color="#6cc96a"/><stop offset=".45" stop-color="#4cb848"/><stop offset="1" stop-color="#45b442"/></radialGradient>
  <linearGradient id="hl" x1="0" y1="0" x2="0" y2="1"><stop offset="0" stop-color="#fff" stop-opacity=".6"/><stop offset="1" stop-color="#fff" stop-opacity="0"/></linearGradient>
 </defs>
 <rect x="126" y="868.6" width="48" height="159.2" rx="24" fill="#000"/>
 <circle cx="149" cy="903.3" r="20" fill="url(#gg)"/><ellipse cx="149" cy="893.8" rx="15" ry="9.5" fill="url(#hl)"/>
 <circle cx="149" cy="948.3" r="20" fill="url(#gg)"/><ellipse cx="149" cy="938.8" rx="15" ry="9.5" fill="url(#hl)"/>
 <circle cx="149" cy="992.7" r="20" fill="url(#gn)"/><ellipse cx="149" cy="983.2" rx="15" ry="9.5" fill="url(#hl)"/>
</svg>

<div id="tbl"><div id="th"></div><div id="fr"></div>
 <div class="abs" style="left:4px;top:4px;font-size:14.8px;line-height:18px;color:#111">Alarme</div>
 <div class="abs" style="left:942px;top:2px;width:1px;height:21px;background:#b0b3b8"></div>
 <div class="abs" style="left:942px;top:26px;width:0;height:22px;border-left:1px dotted #ccc"></div>
 <div class="abs" style="left:947px;top:4px;font-size:14.8px;line-height:18px;color:#111">Début</div>
 <div class="abs" style="left:1457.5px;top:11.5px;width:0;height:0;border-left:3.8px solid transparent;border-right:3.8px solid transparent;border-top:4.2px solid #111"></div>
 <div class="abs" style="left:0;top:54px;width:1492px;text-align:center;font-size:14.8px;line-height:18px;color:#111">Aucun enregistrement à afficher.</div>
</div>
<div class="btn" style="top:884px;height:48.5px;background:#efefef;border-color:#cfd1d4"></div>
<div class="btn" style="top:932px;height:48.5px"></div>
<div class="btn" style="top:980px;height:47px"></div>
<svg class="abs" style="left:1685px;top:884px" width="34" height="143" viewBox="1685 884 34 143">
 <circle cx="1702.3" cy="907" r="13.4" fill="#6a6a6a"/><path d="M1696.4 907.4 L1700.6 911.4 L1709 902.8" fill="none" stroke="#fff" stroke-width="2.2"/>
 <circle cx="1702.3" cy="955.2" r="13.4" fill="#000"/><path d="M1694.5 948.5 L1694.5 961.5 L1710.8 961.5" fill="none" stroke="#fff" stroke-width="1"/><path d="M1695.5 957 L1700.2 952.3 L1705 957.5 L1710.5 949.5" fill="none" stroke="#fff" stroke-width="1.1"/><path d="M1707.8 949.3 L1710.8 949.1 L1710.9 952" fill="none" stroke="#fff" stroke-width="1"/>
 <circle cx="1702.3" cy="1003.4" r="13.4" fill="#000"/>
 <text x="1702.4" y="1012" text-anchor="middle" font-family="Liberation Sans, sans-serif" font-weight="bold" font-size="24" fill="#fff" stroke="#fff" stroke-width=".7">?</text>
</svg>
<div id="rearm">REARM</div>
<div class="abs" style="left:0;top:1033px;width:1860px;height:1px;background:#1a2026"></div>
</body></html>
